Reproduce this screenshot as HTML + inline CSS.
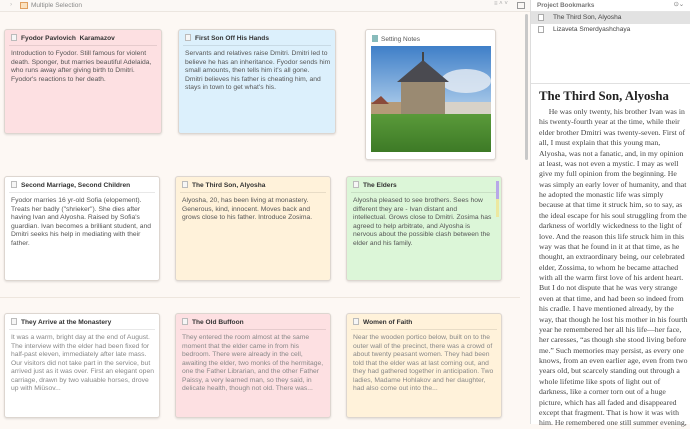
<!DOCTYPE html>
<html><head><meta charset="utf-8"><style>
*{margin:0;padding:0;box-sizing:border-box}
body{width:690px;height:424px;overflow:hidden;background:#fdf8f4;font-family:"Liberation Sans",sans-serif;position:relative}
.top{position:absolute;left:0;top:0;width:530px;height:12px;border-bottom:1px solid #ece6e0;background:#fbf8f5;font-size:6.5px;color:#888}
.card{position:absolute;width:157px;height:105px;border:1px solid #ddd6d0;border-radius:3px;box-shadow:0 1px 2px rgba(0,0,0,.12);overflow:hidden}
.card h4{font-size:6.6px;font-weight:bold;color:#333;margin:4px 4px 0 4px;padding:0 0 3px 0;border-bottom:1px solid rgba(0,0,0,.09);white-space:nowrap}
.card h4 i{display:inline-block;width:6px;height:7px;border:1px solid #bbb;background:#f6f6f6;margin:0 4px 0 2px;vertical-align:-1px}
.card p{font-size:6.75px;line-height:8.5px;color:#555;margin:4px 4px 0 6px;white-space:nowrap}
.card p.g{color:#888}
.pink{background:#fde0e2}.blue{background:#dcf0fc}.white{background:#fff}.yel{background:#fff2da}.grn{background:#dcf6d8}
.right{position:absolute;left:530px;top:0;width:160px;height:424px;background:#fff;border-left:1px solid #ddd}
.serif{position:absolute;left:539px;top:88px;font-family:"Liberation Serif",serif;font-size:7.75px;line-height:10.37px;color:#444;white-space:nowrap}
</style></head><body>
<div class="top"><span style="position:absolute;left:10px;top:1px;color:#bbb">›</span><span style="position:absolute;left:20px;top:2px;width:8px;height:7px;border:1px solid #e0a060;background:#fbe2c0"></span><span style="position:absolute;left:31px;top:2px">Multiple Selection</span>
<span style="position:absolute;left:494px;top:1px;color:#aaa;font-size:6px">≡ ˄ ˅</span><span style="position:absolute;left:517px;top:2px;width:8px;height:7px;border:1px solid #999"></span></div>

<div class="card pink" style="left:4px;top:29px;width:158px"><h4><i></i>Fyodor Pavlovich &nbsp;Karamazov</h4><p>Introduction to Fyodor. Still famous for violent<br>death. Sponger, but marries beautiful Adelaida,<br>who runs away after giving birth to Dmitri.<br>Fyodor's reactions to her death.</p></div>
<div class="card blue" style="left:178px;top:29px;width:158px"><h4><i></i>First Son Off His Hands</h4><p>Servants and relatives raise Dmitri. Dmitri led to<br>believe he has an inheritance. Fyodor sends him<br>small amounts, then tells him it's all gone.<br>Dmitri believes his father is cheating him, and<br>stays in town to get what's his.</p></div>
<div class="card white" style="left:365px;top:29px;width:131px;height:131px"><div style="font-size:6.5px;color:#555;margin:5px 0 0 6px"><span style="display:inline-block;width:6px;height:7px;background:#8bb;margin-right:3px;vertical-align:-1px"></span>Setting Notes</div>
<svg style="position:absolute;left:5px;top:16px" width="120" height="106" viewBox="0 0 120 106"><defs><linearGradient id="s" x1="0" y1="0" x2="0" y2="1"><stop offset="0" stop-color="#3f7fc8"/><stop offset="1" stop-color="#b8d4ee"/></linearGradient><linearGradient id="g" x1="0" y1="0" x2="0" y2="1"><stop offset="0" stop-color="#5a9a3a"/><stop offset="1" stop-color="#3d7a26"/></linearGradient></defs><rect width="120" height="70" fill="url(#s)"/><ellipse cx="95" cy="35" rx="25" ry="12" fill="#e8eef4" opacity=".8"/><rect x="0" y="56" width="120" height="20" fill="#b59a78"/><path d="M0 58 L10 50 L18 58Z" fill="#8a4a3a"/><rect x="30" y="34" width="44" height="36" fill="#9a8a72"/><path d="M26 36 L52 14 L78 36Z" fill="#4a4a50"/><rect x="51" y="6" width="2" height="9" fill="#444"/><rect x="74" y="56" width="46" height="14" fill="#d8d2c8"/><rect y="68" width="120" height="38" fill="url(#g)"/></svg></div>

<div class="card white" style="left:4px;top:176px;width:156px"><h4><i></i>Second Marriage, Second Children</h4><p>Fyodor marries 16 yr-old Sofia (elopement).<br>Treats her badly ("shrieker"). She dies after<br>having Ivan and Alyosha. Raised by Sofia's<br>guardian. Ivan becomes a brilliant student, and<br>Dmitri seeks his help in mediating with their<br>father.</p></div>
<div class="card yel" style="left:175px;top:176px;width:156px"><h4><i></i>The Third Son, Alyosha</h4><p>Alyosha, 20, has been living at monastery.<br>Generous, kind, innocent. Moves back and<br>grows close to his father. Introduce Zosima.</p></div>
<div class="card grn" style="left:346px;top:176px;width:156px"><h4><i></i>The Elders</h4><p>Alyosha pleased to see brothers. Sees how<br>different they are - Ivan distant and<br>intellectual. Grows close to Dmitri. Zosima has<br>agreed to help arbitrate, and Alyosha is<br>nervous about the possible clash between the<br>elder and his family.</p><div style="position:absolute;right:2px;top:4px;width:3px;height:18px;background:#b8a8e8"></div><div style="position:absolute;right:2px;top:22px;width:3px;height:18px;background:#ece8a0"></div></div>

<div style="position:absolute;left:0;top:297px;width:520px;height:1px;background:#eee6de"></div>

<div class="card white" style="left:4px;top:313px;width:156px"><h4><i></i>They Arrive at the Monastery</h4><p class="g">It was a warm, bright day at the end of August.<br>The interview with the elder had been fixed for<br>half-past eleven, immediately after late mass.<br>Our visitors did not take part in the service, but<br>arrived just as it was over. First an elegant open<br>carriage, drawn by two valuable horses, drove<br>up with Miüsov...</p></div>
<div class="card pink" style="left:175px;top:313px;width:156px"><h4><i></i>The Old Buffoon</h4><p class="g">They entered the room almost at the same<br>moment that the elder came in from his<br>bedroom. There were already in the cell,<br>awaiting the elder, two monks of the hermitage,<br>one the Father Librarian, and the other Father<br>Paissy, a very learned man, so they said, in<br>delicate health, though not old. There was...</p></div>
<div class="card yel" style="left:346px;top:313px;width:156px"><h4><i></i>Women of Faith</h4><p class="g">Near the wooden portico below, built on to the<br>outer wall of the precinct, there was a crowd of<br>about twenty peasant women. They had been<br>told that the elder was at last coming out, and<br>they had gathered together in anticipation. Two<br>ladies, Madame Hohlakov and her daughter,<br>had also come out into the...</p></div>

<div style="position:absolute;left:525px;top:14px;width:3px;height:146px;background:#c8c8c8;border-radius:2px"></div>

<div class="right">
<div style="height:12px;border-bottom:1px solid #e4e4e4;font-size:6.3px;color:#777;padding:2px 0 0 6px;font-weight:bold">Project Bookmarks<span style="position:absolute;right:6px;top:1px;font-weight:normal">⊙⌄</span></div>
<div style="height:12px;background:#e2e2e2;font-size:6.6px;color:#444;padding:2px 0 0 22px;position:relative"><span style="position:absolute;left:7px;top:2px;width:6px;height:7px;border:1px solid #aaa;background:#fff"></span>The Third Son, Alyosha</div>
<div style="height:12px;font-size:6.6px;color:#444;padding:2px 0 0 22px;position:relative"><span style="position:absolute;left:7px;top:2px;width:6px;height:7px;border:1px solid #aaa;background:#fff"></span>Lizaveta Smerdyashchaya</div>
<div style="position:absolute;left:0;top:83px;width:160px;height:1px;background:#e0e0e0"></div>
</div>
<div class="serif"><div style="font-size:12.8px;font-weight:bold;color:#222;line-height:16px;margin-bottom:3px">The Third Son, Alyosha</div>
&nbsp;&nbsp;&nbsp;&nbsp;&nbsp;He was only twenty, his brother Ivan was in<br>his twenty-fourth year at the time, while their<br>elder brother Dmitri was twenty-seven. First of<br>all, I must explain that this young man,<br>Alyosha, was not a fanatic, and, in my opinion<br>at least, was not even a mystic. I may as well<br>give my full opinion from the beginning. He<br>was simply an early lover of humanity, and that<br>he adopted the monastic life was simply<br>because at that time it struck him, so to say, as<br>the ideal escape for his soul struggling from the<br>darkness of worldly wickedness to the light of<br>love. And the reason this life struck him in this<br>way was that he found in it at that time, as he<br>thought, an extraordinary being, our celebrated<br>elder, Zossima, to whom he became attached<br>with all the warm first love of his ardent heart.<br>But I do not dispute that he was very strange<br>even at that time, and had been so indeed from<br>his cradle. I have mentioned already, by the<br>way, that though he lost his mother in his fourth<br>year he remembered her all his life—her face,<br>her caresses, “as though she stood living before<br>me.” Such memories may persist, as every one<br>knows, from an even earlier age, even from two<br>years old, but scarcely standing out through a<br>whole lifetime like spots of light out of<br>darkness, like a corner torn out of a huge<br>picture, which has all faded and disappeared<br>except that fragment. That is how it was with<br>him. He remembered one still summer evening,</div>
</body></html>
